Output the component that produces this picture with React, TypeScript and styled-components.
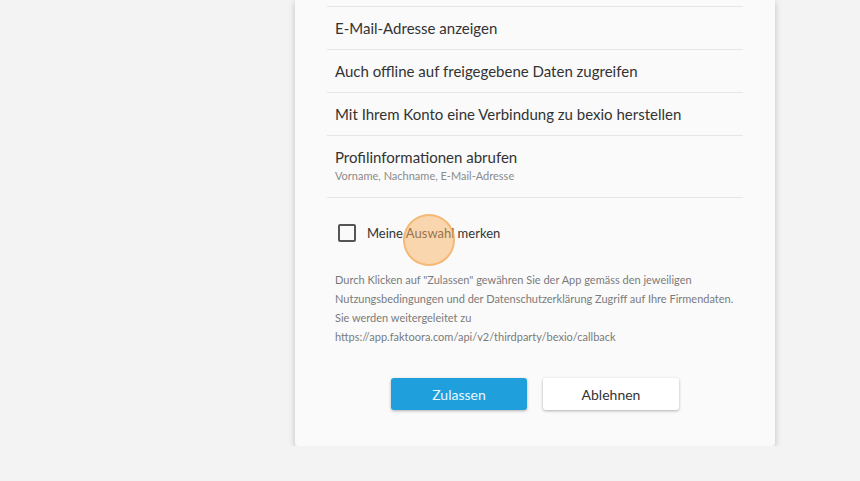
import styled, { createGlobalStyle } from 'styled-components';

const GlobalStyle = createGlobalStyle`
  html, body {
    margin: 0;
    background: #f3f3f3;
    font-family: Lato, "Open Sans", sans-serif;
  }
`;

const Page = styled.div`
  display: flex;
  padding-left: 295px;
`;

const Card = styled.div`
  width: 480px;
  box-sizing: border-box;
  background: #fafafa;
  padding: 6px 32px 36px;
  box-shadow: 0 2px 6px rgba(0, 0, 0, 0.22);
  border-radius: 0 0 3px 3px;
`;

const ScopeList = styled.ul`
  list-style: none;
  margin: 0;
  padding: 0;
  border-bottom: 1px solid #e6e6e6;
`;

const Scope = styled.li`
  border-top: 1px solid #e6e6e6;
  padding: 11px 8px ${(p: { $sub?: boolean }) => (p.$sub ? '13px' : '11px')};
`;

const ScopeTitle = styled.div`
  font-size: 15px;
  line-height: 20px;
  color: #333;
`;

const ScopeSub = styled.div`
  margin-top: 1px;
  font-size: 11px;
  line-height: 16px;
  color: #8a8a8a;
`;

const Remember = styled.label`
  position: relative;
  display: flex;
  align-items: center;
  gap: 11px;
  height: 24px;
  margin-top: 23px;
  padding-left: 11px;
  font-size: 13px;
  color: #333;
`;

const Box = styled.span`
  width: 18px;
  height: 18px;
  box-sizing: border-box;
  border: 2px solid #555;
  border-radius: 2px;
`;

const ClickMark = styled.span`
  position: absolute;
  left: 76px;
  top: -7px;
  width: 52px;
  height: 52px;
  box-sizing: border-box;
  border-radius: 50%;
  background: rgba(250, 178, 100, 0.5);
  border: 2px solid rgba(240, 160, 70, 0.55);
`;

const Notice = styled.p`
  margin: 25px 0 0;
  padding-left: 8px;
  font-size: 11px;
  line-height: 19px;
  color: #7a7a7a;
`;

const Actions = styled.div`
  display: flex;
  justify-content: center;
  gap: 16px;
  margin-top: 32px;
`;

const Button = styled.button<{ $primary?: boolean }>`
  width: 136px;
  height: 32px;
  border: none;
  border-radius: 3px;
  font-family: inherit;
  font-size: 14px;
  background: ${(p) => (p.$primary ? '#1fa0dd' : '#ffffff')};
  color: ${(p) => (p.$primary ? '#eaf7ff' : '#333')};
  box-shadow: 0 1px 3px rgba(0, 0, 0, 0.3);
`;

export default function App() {
  return (
    <>
      <GlobalStyle />
      <Page>
        <Card>
          <ScopeList>
            <Scope>
              <ScopeTitle>E-Mail-Adresse anzeigen</ScopeTitle>
            </Scope>
            <Scope>
              <ScopeTitle>Auch offline auf freigegebene Daten zugreifen</ScopeTitle>
            </Scope>
            <Scope>
              <ScopeTitle>Mit Ihrem Konto eine Verbindung zu bexio herstellen</ScopeTitle>
            </Scope>
            <Scope $sub>
              <ScopeTitle>Profilinformationen abrufen</ScopeTitle>
              <ScopeSub>Vorname, Nachname, E-Mail-Adresse</ScopeSub>
            </Scope>
          </ScopeList>
          <Remember>
            <Box />
            Meine Auswahl merken
            <ClickMark />
          </Remember>
          <Notice>
            Durch Klicken auf "Zulassen" gewähren Sie der App gemäss den jeweiligen
            <br />
            Nutzungsbedingungen und der Datenschutzerklärung Zugriff auf Ihre Firmendaten.
            <br />
            Sie werden weitergeleitet zu
            <br />
            https://app.faktoora.com/api/v2/thirdparty/bexio/callback
          </Notice>
          <Actions>
            <Button $primary>Zulassen</Button>
            <Button>Ablehnen</Button>
          </Actions>
        </Card>
      </Page>
    </>
  );
}
